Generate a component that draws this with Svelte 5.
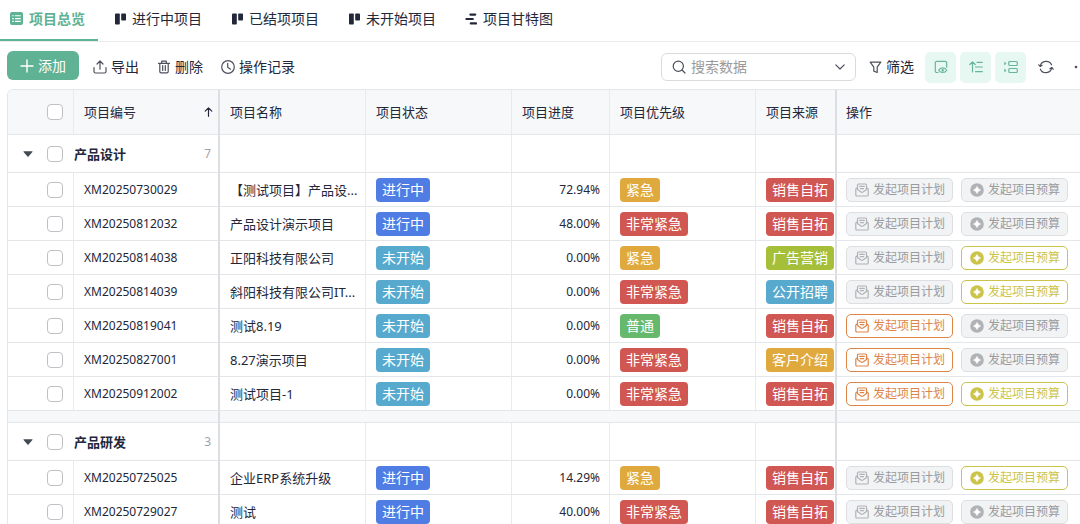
<script>
    const tabs = [
        { name: "项目总览", icon: "sheet" },
        { name: "进行中项目", icon: "board" },
        { name: "已结项项目", icon: "board" },
        { name: "未开始项目", icon: "board" },
        { name: "项目甘特图", icon: "gantt" },
    ];
    let active = $state(0);
    let keyword = $state("");

    const tagColors = {
        进行中: "blue",
        未开始: "teal",
        紧急: "gold",
        非常紧急: "red",
        普通: "green",
        销售自拓: "red",
        广告营销: "lime",
        公开招聘: "teal",
        客户介绍: "gold",
    };

    // plan / budget: whether the row action can be started
    const groups = [
        {
            name: "产品设计",
            count: 7,
            rows: [
                { id: "XM20250730029", name: "【测试项目】产品设...", status: "进行中", progress: "72.94%", level: "紧急", source: "销售自拓", plan: false, budget: false },
                { id: "XM20250812032", name: "产品设计演示项目", status: "进行中", progress: "48.00%", level: "非常紧急", source: "销售自拓", plan: false, budget: false },
                { id: "XM20250814038", name: "正阳科技有限公司", status: "未开始", progress: "0.00%", level: "紧急", source: "广告营销", plan: false, budget: true },
                { id: "XM20250814039", name: "斜阳科技有限公司IT...", status: "未开始", progress: "0.00%", level: "非常紧急", source: "公开招聘", plan: false, budget: true },
                { id: "XM20250819041", name: "测试8.19", status: "未开始", progress: "0.00%", level: "普通", source: "销售自拓", plan: true, budget: false },
                { id: "XM20250827001", name: "8.27演示项目", status: "未开始", progress: "0.00%", level: "非常紧急", source: "客户介绍", plan: true, budget: false },
                { id: "XM20250912002", name: "测试项目-1", status: "未开始", progress: "0.00%", level: "非常紧急", source: "销售自拓", plan: true, budget: true },
            ],
        },
        {
            name: "产品研发",
            count: 3,
            rows: [
                { id: "XM20250725025", name: "企业ERP系统升级", status: "进行中", progress: "14.29%", level: "紧急", source: "销售自拓", plan: false, budget: true },
                { id: "XM20250729027", name: "测试", status: "进行中", progress: "40.00%", level: "非常紧急", source: "销售自拓", plan: false, budget: false },
            ],
        },
    ];
    let closed = $state([false, false]);
</script>

{#snippet tag(text)}
    <span class="tag {tagColors[text]}">{text}</span>
{/snippet}

<div class="page">
    <nav class="tabs">
        {#each tabs as tab, i}
            <button class="tab" class:active={active === i} onclick={() => (active = i)}>
                {#if tab.icon === "sheet"}
                    <svg width="13" height="13" viewBox="0 0 13 13">
                        <rect width="13" height="13" rx="2" fill="currentColor" />
                        <path d="M2.2 3.8h1.6M5 3.8h5.8M2.2 6.6h1.6M5 6.6h5.8M2.2 9.4h1.6M5 9.4h5.8" stroke="#fff" stroke-width="1.1" />
                    </svg>
                {:else if tab.icon === "board"}
                    <svg width="12" height="12" viewBox="0 0 12 12" fill="currentColor">
                        <rect x="1" y="0.5" width="4.8" height="11" rx="0.8" />
                        <rect x="7.2" y="0.5" width="4.8" height="7" rx="0.8" />
                    </svg>
                {:else}
                    <svg width="12" height="12" viewBox="0 0 12 12" stroke="currentColor" stroke-width="2.2" stroke-linecap="round">
                        <path d="M5.4 1.6h4.8M1.4 6h6.4M5.8 10.4H11" />
                    </svg>
                {/if}
                {tab.name}
            </button>
        {/each}
    </nav>

    <div class="toolbar">
        <button class="add">
            <svg width="14" height="14" viewBox="0 0 14 14" stroke="currentColor" stroke-width="1.4" stroke-linecap="round">
                <path d="M7 1v12M1 7h12" />
            </svg>
            添加
        </button>
        <div class="tools">
            <button class="tool">
                <svg width="14" height="14" viewBox="0 0 14 14" class="line">
                    <path d="M7 9.2V1.2M4 4l3-3 3 3M1 7.5v4A1.5 1.5 0 0 0 2.5 13h9a1.5 1.5 0 0 0 1.5-1.5v-4" />
                </svg>
                导出
            </button>
            <button class="tool">
                <svg width="14" height="14" viewBox="0 0 14 14" class="line">
                    <path d="M1.5 3.3h11M4.7 3V1.2h4.6V3M2.8 3.5v8a1.3 1.3 0 0 0 1.3 1.3h5.8a1.3 1.3 0 0 0 1.3-1.3v-8M5.7 5.5v5M8.3 5.5v5" />
                </svg>
                删除
            </button>
            <button class="tool">
                <svg width="14" height="14" viewBox="0 0 14 14" class="line">
                    <circle cx="7" cy="7" r="6.3" />
                    <path d="M6.7 3.3v4l2.8 1.9" />
                </svg>
                操作记录
            </button>
        </div>

        <div class="search">
            <svg width="14" height="14" viewBox="0 0 14 14" class="line">
                <circle cx="6.3" cy="6.3" r="5.1" />
                <path d="M10 10l3 3" />
            </svg>
            <input type="text" placeholder="搜索数据" aria-label="搜索数据" bind:value={keyword} />
            <button class="plain" aria-label="展开">
                <svg width="10" height="8" viewBox="0 0 10 8" class="line">
                    <path d="M0.8 1.8L5 6l4.2-4.2" />
                </svg>
            </button>
        </div>
        <button class="tool filter">
            <svg width="13" height="13" viewBox="0 0 13 13" class="line">
                <path d="M1.2 1.2h10.6L8.2 6.2v5.3l-3.4-1.4V6.2z" />
            </svg>
            筛选
        </button>
        <div class="views">
            <button class="view" aria-label="显示字段">
                <svg width="14" height="14" viewBox="0 0 14 14" class="line">
                    <path d="M4 12.5H2.8A1.5 1.5 0 0 1 1.3 11V2.8a1.5 1.5 0 0 1 1.5-1.5h8.4a1.5 1.5 0 0 1 1.5 1.5v4.4" />
                    <path d="M4.6 10.2c1.9-3 6.3-3 8.2 0-1.9 3-6.3 3-8.2 0z" />
                    <circle cx="8.7" cy="10.2" r="0.6" />
                </svg>
            </button>
            <button class="view" aria-label="排序">
                <svg width="14" height="14" viewBox="0 0 14 14" class="line">
                    <path d="M3.5 12V2M0.8 4.5l2.7-2.7 2.7 2.7M8 2.3h5.3M6.5 7h6.8M6.5 11.7h6.8" />
                </svg>
            </button>
            <button class="view" aria-label="分组">
                <svg width="14" height="14" viewBox="0 0 14 14" class="line">
                    <rect x="4.8" y="1.5" width="8.5" height="4" rx="1" />
                    <rect x="4.8" y="8.5" width="8.5" height="4" rx="1" />
                    <path d="M0.7 2.3l1.5 1.2-1.5 1.2zM0.7 9.3l1.5 1.2-1.5 1.2z" fill="currentColor" stroke-width="0.6" />
                </svg>
            </button>
        </div>
        <button class="plain refresh" aria-label="刷新">
            <svg width="16" height="14" viewBox="0 0 16 14" class="line">
                <path d="M2.3 6A6 6 0 0 1 13.6 4.8M13.7 8A6 6 0 0 1 2.4 9.2" />
                <path d="M0.8 4.8l1.5 1.7 1.8-1.2M15.2 9.2l-1.5-1.7-1.8 1.2" />
            </svg>
        </button>
        <button class="plain more" aria-label="更多">
            <svg width="18" height="4" viewBox="0 0 18 4" fill="currentColor">
                <circle cx="2" cy="2" r="1.3" />
                <circle cx="8" cy="2" r="1.3" />
                <circle cx="14" cy="2" r="1.3" />
            </svg>
        </button>
    </div>

    <div class="grid">
        <table>
            <colgroup>
                <col class="w-check" />
                <col class="w-wide" />
                <col class="w-wide" />
                <col class="w-wide" />
                <col class="w-progress" />
                <col class="w-wide" />
                <col class="w-source" />
                <col />
            </colgroup>
            <thead>
                <tr>
                    <th class="check"><input type="checkbox" aria-label="全选" /></th>
                    <th class="fixed">
                        <div class="sorted">
                            项目编号
                            <svg width="9" height="10" viewBox="0 0 9 10" class="line">
                                <path d="M4.5 9.3V1M1.2 4.2L4.5 0.9l3.3 3.3" />
                            </svg>
                        </div>
                    </th>
                    <th>项目名称</th>
                    <th>项目状态</th>
                    <th>项目进度</th>
                    <th>项目优先级</th>
                    <th class="fixed">项目来源</th>
                    <th>操作</th>
                </tr>
            </thead>
            <tbody>
                {#each groups as group, g}
                    {#if g > 0}
                        <tr class="gap">
                            <td class="fixed" colspan="2"></td>
                            <td class="fixed" colspan="5"></td>
                            <td></td>
                        </tr>
                    {/if}
                    <tr class="group">
                        <td class="fixed" colspan="2">
                            <div class="group-head">
                                <button class="plain caret" aria-label="折叠" onclick={() => (closed[g] = !closed[g])}>
                                    <svg width="10" height="6" viewBox="0 0 10 6" fill="currentColor">
                                        <path d="M0.8 0.3h8.4q0.6 0 0.2 0.6L5.5 5.5q-0.5 0.5-1 0L0.6 0.9q-0.4-0.6 0.2-0.6z" />
                                    </svg>
                                </button>
                                <input type="checkbox" aria-label={"选择" + group.name} />
                                <strong>{group.name}</strong>
                                <span class="count">{group.count}</span>
                            </div>
                        </td>
                        <td></td>
                        <td></td>
                        <td></td>
                        <td></td>
                        <td class="fixed"></td>
                        <td></td>
                    </tr>
                    {#if !closed[g]}
                        {#each group.rows as row}
                            <tr>
                                <td class="check"><input type="checkbox" aria-label={"选择" + row.id} /></td>
                                <td class="fixed latin">{row.id}</td>
                                <td class="name">{row.name}</td>
                                <td>{@render tag(row.status)}</td>
                                <td class="latin num">{row.progress}</td>
                                <td>{@render tag(row.level)}</td>
                                <td class="fixed">{@render tag(row.source)}</td>
                                <td>
                                    <div class="actions">
                                        <button class="action plan" disabled={!row.plan}>
                                            <svg width="14" height="14" viewBox="0 0 14 14" class="line">
                                                <path d="M2.5 6.2V1.9A0.9 0.9 0 0 1 3.4 1h7.2a0.9 0.9 0 0 1 0.9 0.9v4.3M4.7 3.4h4.6M5.3 5.6h3.4" />
                                                <path d="M2.4 4.6L0.8 6v6a1 1 0 0 0 1 1h10.4a1 1 0 0 0 1-1V6l-1.6-1.4M2.5 6.6L6 9q1 0.6 2 0l3.5-2.4" />
                                            </svg>
                                            发起项目计划
                                        </button>
                                        <button class="action budget" disabled={!row.budget}>
                                            <svg width="14" height="14" viewBox="0 0 14 14">
                                                <circle cx="7" cy="7" r="6.8" fill="currentColor" />
                                                <path d="M7 3.4Q7.9 6.100 10.6 7 7.900 7.900 7 10.600 6.100 7.900 3.400 7 6.100 6.100 7 3.400z" fill="#fff" stroke="#fff" stroke-width="0.6" stroke-linejoin="round" />
                                            </svg>
                                            发起项目预算
                                        </button>
                                    </div>
                                </td>
                            </tr>
                        {/each}
                    {/if}
                {/each}
            </tbody>
        </table>
    </div>
</div>

<style>
    :global(body) {
        margin: 0;
        background: #fff;
    }

    .page {
        height: 100vh;
        overflow: hidden;
        display: flex;
        flex-direction: column;
        font-family: "Noto Sans", "Noto Sans CJK SC", sans-serif;
        font-size: 14px;
        line-height: 20px;
        color: #23273a;
    }

    button {
        font: inherit;
        color: inherit;
        background: none;
        border: none;
        padding: 0;
        margin: 0;
        cursor: pointer;
        display: flex;
        align-items: center;
        white-space: nowrap;
    }

    svg {
        display: block;
        flex-shrink: 0;
    }

    .line {
        fill: none;
        stroke: currentColor;
        stroke-width: 1.2;
        stroke-linecap: round;
        stroke-linejoin: round;
    }

    /* tabs */
    .tabs {
        display: flex;
        flex-shrink: 0;
        border-bottom: 1px solid #e9ebed;
    }

    .tab {
        height: 41px;
        box-sizing: border-box;
        gap: 6px;
        padding: 0 13px 2px 16px;
        border-bottom: 2px solid transparent;
    }

    .tab:first-child {
        padding-left: 10px;
    }

    .tab.active {
        color: #5fb294;
        font-weight: 700;
        border-color: #5fb294;
    }

    /* toolbar */
    .toolbar {
        display: flex;
        flex-shrink: 0;
        align-items: center;
        padding: 9px 0 6px 7px;
        min-height: 32px;
        overflow: hidden;
    }

    .add {
        align-self: flex-start;
        height: 29px;
        padding: 0 13px;
        gap: 4px;
        border-radius: 6px;
        background: #60b295;
        color: #fff;
    }

    .tools {
        display: flex;
        gap: 18px;
        margin-left: 14px;
    }

    .tool {
        gap: 4px;
    }

    .tool svg,
    .search svg,
    .refresh,
    .more {
        color: #4c505c;
    }

    .search {
        display: flex;
        align-items: center;
        gap: 5px;
        box-sizing: border-box;
        width: 195px;
        height: 28px;
        margin-left: auto;
        padding: 0 10px;
        border: 1px solid #d9dcde;
        border-radius: 6px;
    }

    .search input {
        flex: 1;
        min-width: 0;
        padding: 0;
        border: none;
        outline: none;
        background: none;
        font: inherit;
        color: inherit;
    }

    .search input::placeholder {
        color: #9a9a9a;
    }

    .filter {
        margin-left: 13px;
    }

    .views {
        display: flex;
        gap: 4px;
        margin: 0 12px 0 11px;
    }

    .view {
        width: 31px;
        height: 31px;
        justify-content: center;
        border-radius: 5px;
        background: #e7f8f3;
        color: #67b698;
    }

    .more {
        margin: 0 -12px 0 20px;
    }

    /* table */
    .grid {
        flex: 1;
        min-height: 0;
        overflow: hidden;
        margin-left: 7px;
        border: 1px solid #e4e7ea;
        border-width: 1px 0 0 1px;
        border-top-left-radius: 6px;
    }

    table {
        width: 100%;
        table-layout: fixed;
        border-collapse: separate;
        border-spacing: 0;
        font-size: 13px;
    }

    .w-check {
        width: 66px;
    }

    .w-wide {
        width: 146px;
    }

    .w-progress {
        width: 98px;
    }

    .w-source {
        width: 81px;
    }

    th,
    td {
        box-sizing: border-box;
        height: 34px;
        padding: 0 0 0 10px;
        text-align: left;
        font-weight: 400;
        white-space: nowrap;
        border-right: 1px solid #e8eaee;
        border-bottom: 1px solid #e4e7ea;
    }

    th {
        height: 45px;
        background: #f6f8fa;
    }

    th:last-child,
    td:last-child {
        padding-left: 9px;
        border-right: none;
    }

    .fixed {
        border-right: 2px solid #dcdee2;
    }

    .check {
        padding-left: 39px;
    }

    input[type="checkbox"] {
        appearance: none;
        display: block;
        box-sizing: border-box;
        width: 16px;
        height: 16px;
        margin: 0;
        border: 1px solid #bfc1c5;
        border-radius: 4px;
        background: #fff;
    }

    input[type="checkbox"]:checked {
        border-color: #60b295;
        background: #60b295;
    }

    .sorted {
        display: flex;
        align-items: center;
        justify-content: space-between;
        padding-right: 5px;
    }

    .group td {
        height: 38px;
    }

    .group-head {
        display: flex;
        align-items: center;
        padding-right: 7px;
    }

    .group-head strong {
        margin-left: 11px;
        font-weight: 700;
    }

    .group td:first-child {
        padding-left: 15px;
    }

    .caret {
        margin-right: 14px;
        color: #454955;
    }

    .count {
        margin-left: auto;
        font-size: 12px;
        color: #a0a2a6;
    }

    .gap td {
        height: 12px;
        background: #f6f8fa;
    }

    .gap td:not(.fixed) {
        border-right: none;
    }

    .latin {
        font-size: 12px;
    }

    .num {
        padding-right: 9px;
        text-align: right;
    }

    .name {
        overflow: hidden;
    }

    .tag {
        display: block;
        width: fit-content;
        height: 24px;
        padding: 0 6px;
        border-radius: 4px;
        font-size: 14px;
        line-height: 24px;
        color: #fff;
    }

    .blue {
        background: #4f7de4;
    }

    .teal {
        background: #57a9cd;
    }

    .gold {
        background: #dfa93e;
    }

    .red {
        background: #d15752;
    }

    .green {
        background: #66b96c;
    }

    .lime {
        background: #a6bf38;
    }

    .actions {
        display: flex;
        gap: 8px;
    }

    .action {
        box-sizing: border-box;
        height: 24px;
        padding: 0 7px 0 8px;
        gap: 4px;
        border: 1px solid currentColor;
        border-radius: 5px;
        font-size: 12px;
        background: #fff;
    }

    .plan {
        color: #dd8547;
    }

    .budget {
        color: #ccc34a;
    }

    .action:disabled {
        color: #999b9e;
        border-color: #dcdee0;
        background: #f2f3f4;
        cursor: default;
    }

    .action:disabled svg {
        color: #b0b2b5;
    }
</style>
